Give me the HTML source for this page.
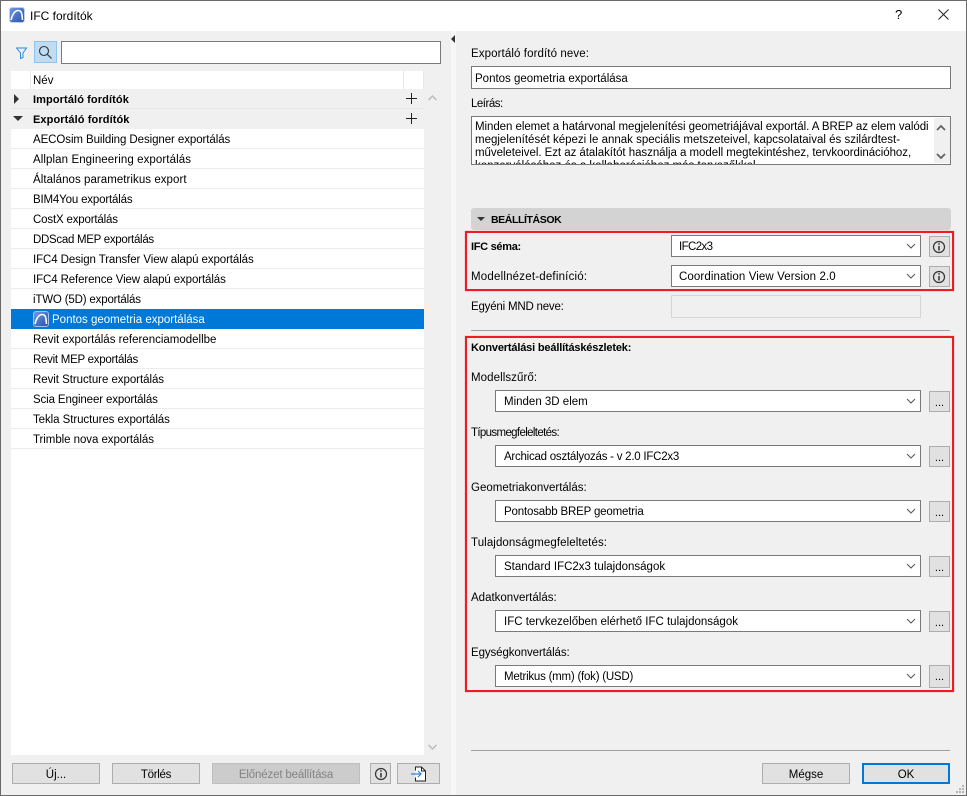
<!DOCTYPE html>
<html lang="hu"><head><meta charset="utf-8"><title>IFC fordítók</title>
<style>
html,body{margin:0;padding:0}
body{width:967px;height:796px;position:relative;overflow:hidden;background:#f0f0f0;font-family:"Liberation Sans",sans-serif;font-size:11.5px;color:#000;letter-spacing:0}
div,span,svg{position:absolute;box-sizing:border-box}
.t{white-space:nowrap;line-height:14px;height:14px;margin-top:1px}
.b{font-weight:bold;font-size:11px}
.rowl{left:11px;width:413px;height:1px;background:#ececec}
.in{background:#fff;border:1px solid #7a7a7a}
.btn{background:#e1e1e1;border:1px solid #adadad;text-align:center;line-height:23px;white-space:nowrap}
.sel{background:#fff;border:1px solid #7a7a7a;height:22px;left:495px;width:426px;line-height:22px;padding-left:8px;white-space:nowrap}
.sel.s{left:671px;width:250px;padding-left:7px}
.chev{right:4px;top:7px;width:10px;height:6px}
.dots{left:929px;width:21px;height:21px;background:#e1e1e1;border:1px solid #adadad;text-align:center;line-height:22px;font-size:11px}
.red{border:2px solid #ed1c24;box-shadow:0 0 1px #ff6a70}
</style></head><body>
<!-- window -->
<div style="left:0;top:0;width:967px;height:31px;background:#fff"></div>
<div style="left:0;top:0;width:1px;height:796px;background:#6a6a6a"></div>
<div style="left:966px;top:0;width:1px;height:796px;background:#6a6a6a"></div>
<div style="left:0;top:795px;width:967px;height:1px;background:#6a6a6a"></div>
<div style="left:0;top:0;width:967px;height:1px;background:#6a6a6a"></div>
<svg style="left:9px;top:7px" width="16" height="16" viewBox="0 0 16 16"><defs><linearGradient id="g" x1="0" y1="0" x2="1" y2="1"><stop offset="0" stop-color="#6f9be6"/><stop offset="1" stop-color="#2b4fa6"/></linearGradient></defs><rect x=".5" y=".5" width="15" height="15" rx="2.500" fill="url(#g)" stroke="#c3cfea"/><path d="M2 13C3.500 7 6 3.500 9.500 3.500c1.800 0 3 1.500 3.500 4.500l.5 5" fill="none" stroke="#fff" stroke-width="1.600"/></svg>
<div class="t" style="left:30px;top:8px;font-size:12px">IFC fordítók</div>
<div class="t" style="left:895px;top:7px;font-size:13px">?</div>
<svg style="left:938px;top:9px" width="11" height="11" viewBox="0 0 11 11"><path d="M.5.500l10 10M10.500.500l-10 10" stroke="#222" fill="none"/></svg>

<!-- search -->
<svg style="left:16px;top:47px" width="12" height="12" viewBox="0 0 12 12"><path d="M.5 1h10L7 6v4.500L4.500 11.500V6z" fill="none" stroke="#2a8ae0"/></svg>
<div style="left:34px;top:41px;width:23px;height:22px;background:#bfdcf3;border:1px solid #90c4ec"></div>
<svg style="left:38px;top:45px" width="15" height="15" viewBox="0 0 15 15"><circle cx="6" cy="6" r="4.500" fill="none" stroke="#333" stroke-width="1.100"/><path d="M9.500 9.500l4 4" stroke="#333" stroke-width="1.200"/></svg>
<div class="in" style="left:61px;top:41px;width:380px;height:23px"></div>

<!-- list -->
<div style="left:11px;top:71px;width:413px;height:684px;background:#fff"></div>
<div style="left:30px;top:71px;width:1px;height:18px;background:#e6e6e6"></div>
<div style="left:403px;top:71px;width:1px;height:18px;background:#e6e6e6"></div>
<div style="left:423px;top:71px;width:1px;height:18px;background:#e6e6e6"></div>
<div class="t" style="left:33px;top:73px">Név</div>
<div style="left:11px;top:89px;width:413px;height:40px;background:#f0f0f0"></div>
<div class="rowl" style="top:108px;background:#e8e8e8"></div>
<svg style="left:14px;top:94px" width="6" height="10"><path d="M0 0l5 5-5 5z" fill="#333"/></svg>
<svg style="left:13px;top:116px" width="10" height="6"><path d="M0 0h10L5 5z" fill="#333"/></svg>
<div class="t b" style="left:33px;top:92px;letter-spacing:.1px">Importáló fordítók</div>
<div class="t b" style="left:33px;top:112px;letter-spacing:.1px">Exportáló fordítók</div>
<svg style="left:406px;top:93px" width="12" height="12"><path d="M5.500 0v11M0 5.500h11" stroke="#222" fill="none"/></svg>
<svg style="left:406px;top:113px" width="12" height="12"><path d="M5.500 0v11M0 5.500h11" stroke="#222" fill="none"/></svg>

<div class="rowl" style="top:148px"></div><div class="rowl" style="top:168px"></div><div class="rowl" style="top:188px"></div><div class="rowl" style="top:208px"></div><div class="rowl" style="top:228px"></div><div class="rowl" style="top:248px"></div><div class="rowl" style="top:268px"></div><div class="rowl" style="top:288px"></div><div class="rowl" style="top:348px"></div><div class="rowl" style="top:368px"></div><div class="rowl" style="top:388px"></div><div class="rowl" style="top:408px"></div><div class="rowl" style="top:428px"></div><div class="rowl" style="top:448px"></div>
<div style="left:11px;top:309px;width:413px;height:20px;background:#0078d7"></div>
<div class="t" style="left:33px;top:132px;letter-spacing:-.08px">AECOsim Building Designer exportálás</div>
<div class="t" style="left:33px;top:152px;letter-spacing:.09px">Allplan Engineering exportálás</div>
<div class="t" style="left:33px;top:172px;letter-spacing:.05px">Általános parametrikus export</div>
<div class="t" style="left:33px;top:192px;letter-spacing:-.17px">BIM4You exportálás</div>
<div class="t" style="left:33px;top:212px;letter-spacing:-.17px">CostX exportálás</div>
<div class="t" style="left:33px;top:232px;letter-spacing:-.29px">DDScad MEP exportálás</div>
<div class="t" style="left:33px;top:252px;letter-spacing:-.1px">IFC4 Design Transfer View alapú exportálás</div>
<div class="t" style="left:33px;top:272px;letter-spacing:-.11px">IFC4 Reference View alapú exportálás</div>
<div class="t" style="left:33px;top:292px;letter-spacing:-.17px">iTWO (5D) exportálás</div>
<svg style="left:33px;top:311px" width="16" height="16" viewBox="0 0 16 16"><rect x=".5" y=".5" width="15" height="15" rx="2.500" fill="url(#g)" stroke="#a9bde6"/><path d="M2 13C3.500 7 6 3.500 9.500 3.500c1.800 0 3 1.500 3.500 4.500l.5 5" fill="none" stroke="#fff" stroke-width="1.600"/></svg>
<div class="t" style="left:52px;top:312px;color:#fff">Pontos geometria exportálása</div>
<div class="t" style="left:33px;top:332px">Revit exportálás referenciamodellbe</div>
<div class="t" style="left:33px;top:352px;letter-spacing:-.27px">Revit MEP exportálás</div>
<div class="t" style="left:33px;top:372px;letter-spacing:-.05px">Revit Structure exportálás</div>
<div class="t" style="left:33px;top:392px;letter-spacing:-.13px">Scia Engineer exportálás</div>
<div class="t" style="left:33px;top:412px;letter-spacing:-.07px">Tekla Structures exportálás</div>
<div class="t" style="left:33px;top:432px;letter-spacing:-.06px">Trimble nova exportálás</div>
<svg style="left:428px;top:95px" width="9" height="6"><path d="M.5 5L4.500 1l4 4" fill="none" stroke="#c0c0c0" stroke-width="1.600"/></svg>
<svg style="left:428px;top:744px" width="9" height="6"><path d="M.5 1l4 4 4-4" fill="none" stroke="#c0c0c0" stroke-width="1.600"/></svg>

<!-- bottom left -->
<div class="btn" style="left:12px;top:763px;width:88px;height:21px">Új...</div>
<div class="btn" style="left:112px;top:763px;width:88px;height:21px;letter-spacing:-.3px">Törlés</div>
<div class="btn" style="left:212px;top:763px;width:148px;height:21px;background:#cccccc;border-color:#bfbfbf;color:#838383;letter-spacing:-.15px">Előnézet beállítása</div>
<div class="btn" style="left:370px;top:763px;width:21px;height:21px"></div>
<svg style="left:374px;top:767px" width="14" height="14" viewBox="0 0 14 14"><circle cx="7" cy="7" r="5.500" fill="none" stroke="#333" stroke-width="1.200"/><path d="M7 6v4.500" stroke="#333" stroke-width="1.500"/><path d="M7 3.200v1.500" stroke="#333" stroke-width="1.500"/></svg>
<div class="btn" style="left:397px;top:763px;width:43px;height:21px"></div>
<svg style="left:410px;top:766px" width="18" height="16" viewBox="0 0 18 16"><path d="M5.500 4.500V1h6l4 4v10h-10v-3.500" fill="#fff" stroke="#222"/><path d="M11.500 1v4h4" fill="none" stroke="#222"/><path d="M1 8h10M8 5l3 3-3 3" fill="none" stroke="#2a7fe0" stroke-width="1.200"/></svg>

<!-- splitter -->
<div style="left:451px;top:31px;width:5px;height:764px;background:#f7f7f7"></div>
<svg style="left:451px;top:35px" width="5" height="9"><path d="M4 0v8L0 4z" fill="#333"/></svg>

<!-- right top -->
<div class="t" style="left:471px;top:46px;letter-spacing:.1px">Exportáló fordító neve:</div>
<div class="in" style="left:471px;top:66px;width:480px;height:23px"></div>
<div class="t" style="left:475px;top:71px">Pontos geometria exportálása</div>
<div class="t" style="left:471px;top:96px;letter-spacing:-.5px">Leírás:</div>
<div class="in" style="left:471px;top:116px;width:480px;height:49px;overflow:hidden">
<div class="t" style="left:3px;top:2px;letter-spacing:-.06px">Minden elemet a határvonal megjelenítési geometriájával exportál. A BREP az elem valódi</div>
<div class="t" style="left:3px;top:15px">megjelenítését képezi le annak speciális metszeteivel, kapcsolataival és szilárdtest-</div>
<div class="t" style="left:3px;top:28px;letter-spacing:-.05px">műveleteivel. Ezt az átalakítót használja a modell megtekintéshez, tervkoordinációhoz,</div>
<div class="t" style="left:3px;top:41px">konzerválásához és a kollaborációhoz más tervezőkkel</div>
<div style="left:462px;top:1px;width:16px;height:45px;background:#f0f0f0"></div>
</div>
<svg style="left:936px;top:124px" width="10" height="7"><path d="M1 6l4-4 4 4" fill="none" stroke="#606060" stroke-width="1.700"/></svg>
<svg style="left:936px;top:153px" width="10" height="7"><path d="M1 1l4 4 4-4" fill="none" stroke="#606060" stroke-width="1.700"/></svg>

<!-- section header -->
<div style="left:471px;top:208px;width:480px;height:22px;background:#d3d3d3;border-radius:3px"></div>
<svg style="left:477px;top:217px" width="8" height="5"><path d="M0 0h8L4 4z" fill="#333"/></svg>
<div class="t b" style="left:491px;top:212px;font-size:10.500px;letter-spacing:-.4px">BEÁLLÍTÁSOK</div>

<!-- red group 1 -->
<div class="red" style="left:465px;top:231px;width:489px;height:60px"></div>
<div class="t b" style="left:471px;top:239px;letter-spacing:-.3px">IFC séma:</div>
<div class="sel s" style="top:235px;letter-spacing:-.6px">IFC2x3<svg class="chev" viewBox="0 0 10 6"><path d="M1 1l4 4 4-4" fill="none" stroke="#555"/></svg></div>
<div class="btn" style="left:929px;top:236px;width:21px;height:21px"></div>
<svg style="left:932px;top:240px" width="14" height="14" viewBox="0 0 14 14"><circle cx="7" cy="7" r="5.500" fill="none" stroke="#333" stroke-width="1.200"/><path d="M7 6v4.500" stroke="#333" stroke-width="1.500"/><path d="M7 3.200v1.500" stroke="#333" stroke-width="1.500"/></svg>
<div class="t" style="left:471px;top:269px;letter-spacing:.2px">Modellnézet-definíció:</div>
<div class="sel s" style="top:265px;letter-spacing:.1px">Coordination View Version 2.0<svg class="chev" viewBox="0 0 10 6"><path d="M1 1l4 4 4-4" fill="none" stroke="#555"/></svg></div>
<div class="btn" style="left:929px;top:266px;width:21px;height:21px"></div>
<svg style="left:932px;top:270px" width="14" height="14" viewBox="0 0 14 14"><circle cx="7" cy="7" r="5.500" fill="none" stroke="#333" stroke-width="1.200"/><path d="M7 6v4.500" stroke="#333" stroke-width="1.500"/><path d="M7 3.200v1.500" stroke="#333" stroke-width="1.500"/></svg>
<div class="t" style="left:471px;top:299px;letter-spacing:-.2px">Egyéni MND neve:</div>
<div style="left:671px;top:295px;width:250px;height:23px;background:#f0f0f0;border:1px solid #d5d5d5"></div>
<div style="left:471px;top:330px;width:479px;height:1px;background:#a0a0a0"></div>

<!-- red group 2 -->
<div class="red" style="left:465px;top:336px;width:489px;height:356px"></div>
<div class="t b" style="left:471px;top:340px;letter-spacing:-.17px">Konvertálási beállításkészletek:</div>
<div class="t" style="left:471px;top:370px;letter-spacing:.08px">Modellszűrő:</div>
<div class="sel" style="top:390px">Minden 3D elem<svg class="chev" viewBox="0 0 10 6"><path d="M1 1l4 4 4-4" fill="none" stroke="#555"/></svg></div>
<div class="dots" style="top:391px">...</div>
<div class="t" style="left:471px;top:425px;letter-spacing:-.65px">Típusmegfeleltetés:</div>
<div class="sel" style="top:445px;letter-spacing:-.24px">Archicad osztályozás - v 2.0 IFC2x3<svg class="chev" viewBox="0 0 10 6"><path d="M1 1l4 4 4-4" fill="none" stroke="#555"/></svg></div>
<div class="dots" style="top:446px">...</div>
<div class="t" style="left:471px;top:480px">Geometriakonvertálás:</div>
<div class="sel" style="top:500px;letter-spacing:-.17px">Pontosabb BREP geometria<svg class="chev" viewBox="0 0 10 6"><path d="M1 1l4 4 4-4" fill="none" stroke="#555"/></svg></div>
<div class="dots" style="top:501px">...</div>
<div class="t" style="left:471px;top:535px;letter-spacing:.09px">Tulajdonságmegfeleltetés:</div>
<div class="sel" style="top:555px">Standard IFC2x3 tulajdonságok<svg class="chev" viewBox="0 0 10 6"><path d="M1 1l4 4 4-4" fill="none" stroke="#555"/></svg></div>
<div class="dots" style="top:556px">...</div>
<div class="t" style="left:471px;top:590px">Adatkonvertálás:</div>
<div class="sel" style="top:610px">IFC tervkezelőben elérhető IFC tulajdonságok<svg class="chev" viewBox="0 0 10 6"><path d="M1 1l4 4 4-4" fill="none" stroke="#555"/></svg></div>
<div class="dots" style="top:611px">...</div>
<div class="t" style="left:471px;top:645px;letter-spacing:-.1px">Egységkonvertálás:</div>
<div class="sel" style="top:665px;letter-spacing:-.23px">Metrikus (mm) (fok) (USD)<svg class="chev" viewBox="0 0 10 6"><path d="M1 1l4 4 4-4" fill="none" stroke="#555"/></svg></div>
<div class="dots" style="top:665px;height:23px">...</div>

<!-- bottom right -->
<div style="left:471px;top:750px;width:479px;height:1px;background:#a0a0a0"></div>
<div class="btn" style="left:762px;top:763px;width:88px;height:21px">Mégse</div>
<div class="btn" style="left:862px;top:763px;width:88px;height:21px;border:2px solid #0078d7;line-height:21px">OK</div>
<svg style="left:955px;top:784px" width="10" height="10" fill="#b5b5b5"><rect x="7" y="1" width="2" height="2"/><rect x="4" y="4" width="2" height="2"/><rect x="7" y="4" width="2" height="2"/><rect x="1" y="7" width="2" height="2"/><rect x="4" y="7" width="2" height="2"/><rect x="7" y="7" width="2" height="2"/></svg>
</body></html>
